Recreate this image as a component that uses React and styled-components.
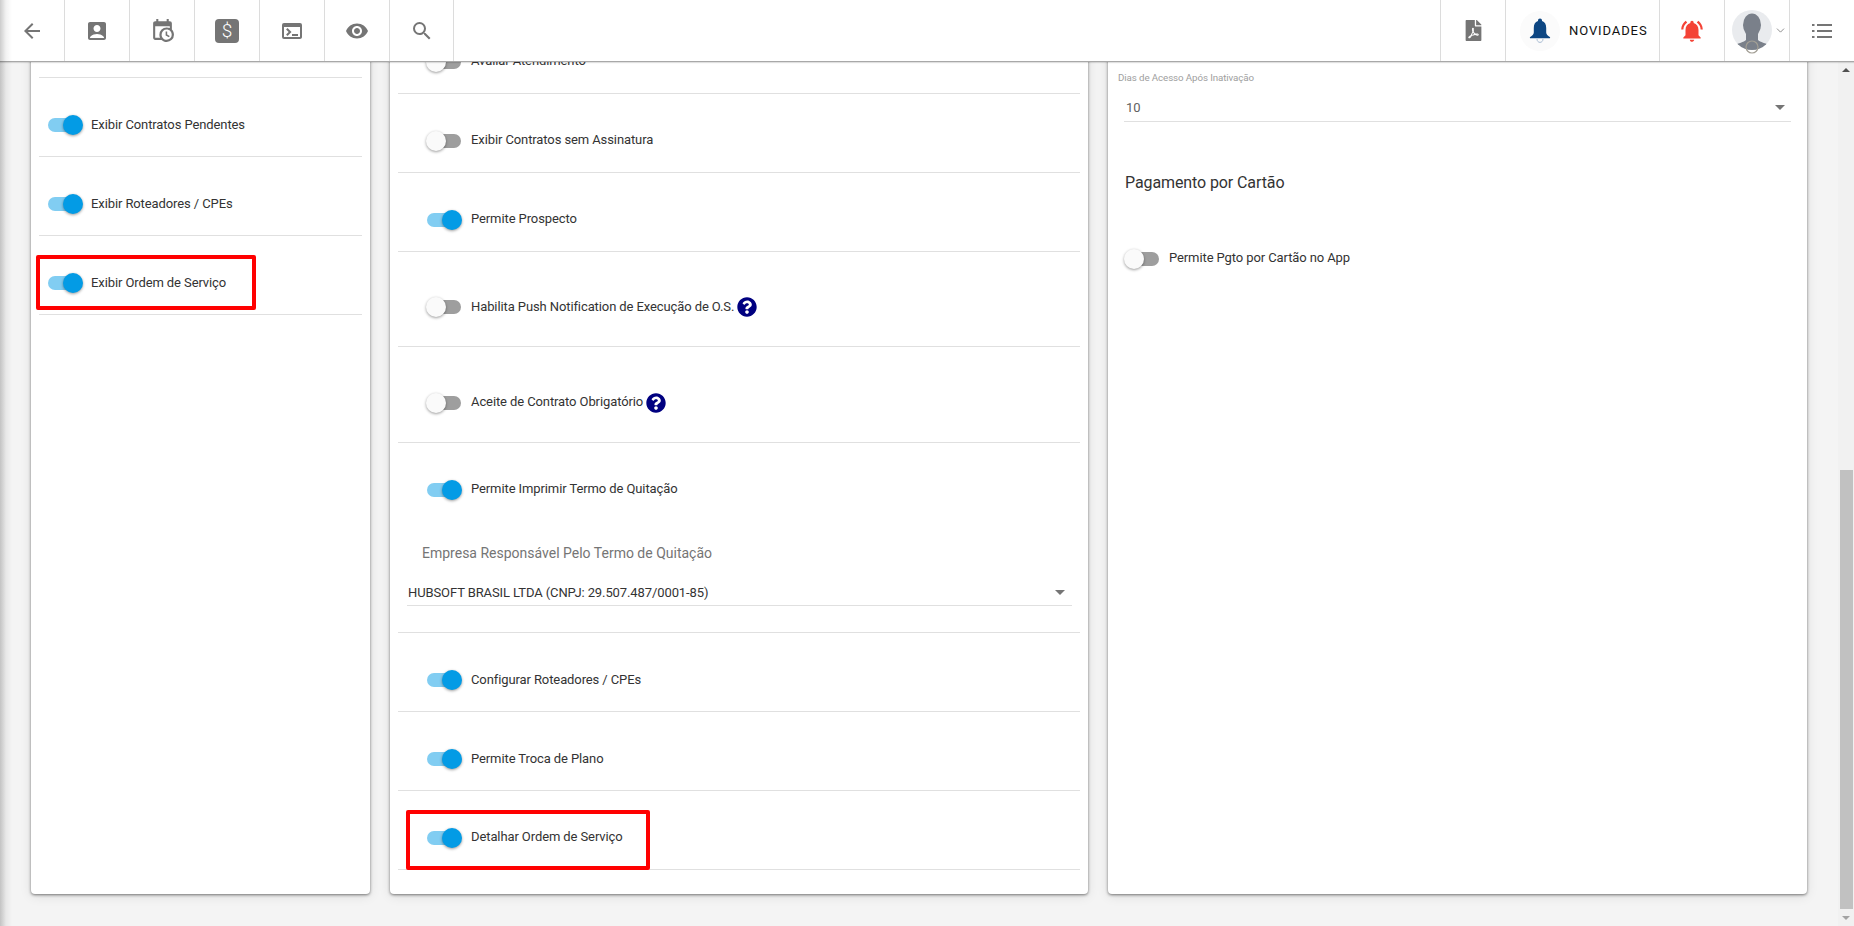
import React from "react";
import styled, { createGlobalStyle } from "styled-components";
import {
  MdArrowBack,
  MdAccountBox,
  MdTerminal,
  MdVisibility,
  MdSearch,
  MdNotificationsActive,
} from "react-icons/md";
import { FaFilePdf, FaQuestionCircle } from "react-icons/fa";
import { ChevronDown } from "lucide-react";

const GlobalStyle = createGlobalStyle`
  html, body {
    margin: 0;
    height: 100%;
    overflow: hidden;
    background: #f4f4f4;
    font-family: Roboto, "Liberation Sans", sans-serif;
  }
`;

const Page = styled.div`
  position: relative;
  display: flex;
  width: 1854px;
  height: 926px;
  overflow: hidden;
  background: #f4f4f4;
`;

// shadow of the collapsed side menu, lies over the header too
const EdgeShadow = styled.div`
  position: absolute;
  top: 0;
  left: 0;
  bottom: 0;
  width: 12px;
  z-index: 20;
  pointer-events: none;
  background: linear-gradient(to right, rgba(0, 0, 0, 0.2), rgba(0, 0, 0, 0.05) 50%, rgba(0, 0, 0, 0));
`;

const Header = styled.header`
  position: absolute;
  top: 0;
  left: 0;
  right: 0;
  height: 61px;
  z-index: 10;
  display: flex;
  justify-content: space-between;
  background: #fff;
  border-bottom: 1px solid #a8a8a8;
  box-shadow: 0 1px 1px rgba(0, 0, 0, 0.12);
`;

const HeaderGroup = styled.div`
  display: flex;
`;

const HeaderCell = styled.div`
  display: flex;
  align-items: center;
  justify-content: center;
  box-sizing: border-box;
  width: ${({ $w }) => $w || 65}px;
  height: 61px;
  color: #757575;
  border-left: ${({ $noLine }) => ($noLine ? "none" : "1px solid #dcdcdc")};
  border-right: ${({ $closing }) => ($closing ? "1px solid #dcdcdc" : "none")};
`;

const DollarIcon = styled.div`
  width: 24px;
  height: 24px;
  border-radius: 4px;
  background: #757575;
  color: #fff;
  font-size: 19px;
  font-weight: 300;
  line-height: 24px;
  text-align: center;
`;

const BellCircle = styled.div`
  display: flex;
  align-items: center;
  justify-content: center;
  width: 40px;
  height: 40px;
  border-radius: 50%;
  background: #fbfbfb;
  margin-right: 9px;
`;

const NewsLabel = styled.span`
  font-size: 13px;
  font-weight: 400;
  letter-spacing: 0.9px;
  color: #111;
`;

const NewsCell = styled(HeaderCell)`
  justify-content: flex-start;
  padding-left: 14px;
`;

const AvatarCell = styled(HeaderCell)`
  gap: 2px;
  padding-left: 5px;
  color: #757575;
`;

const Content = styled.main`
  flex: 1;
  display: grid;
  grid-template-columns: 339px 698px 699px;
  column-gap: 20px;
  height: 894px;
  padding-left: 31px;
`;

const Card = styled.section`
  box-sizing: border-box;
  height: 894px;
  background: #fff;
  border-radius: 0 0 4px 4px;
  box-shadow: 0 1px 3px rgba(0, 0, 0, 0.5), 0 2px 12px rgba(0, 0, 0, 0.1);
  padding: ${({ $pt }) => $pt || 0}px 8px 0;
`;

const Row = styled.div`
  position: relative;
  box-sizing: border-box;
  display: flex;
  align-items: center;
  height: ${({ $h }) => $h || 79}px;
  padding: ${({ $pt }) => $pt || 16}px 0 0 ${({ $pl }) => $pl || 9}px;
  border-bottom: 1px solid #e0e0e0;
`;

const Block = styled.div`
  box-sizing: border-box;
  height: ${({ $h }) => $h}px;
  padding-top: 38px;
  border-bottom: 1px solid #e0e0e0;
`;

const InlineOption = styled.div`
  display: flex;
  align-items: center;
  padding-left: ${({ $pl }) => $pl || 0}px;
`;

const Track = styled.div`
  flex: none;
  display: flex;
  align-items: center;
  justify-content: ${({ $on }) => ($on ? "flex-end" : "flex-start")};
  width: 34px;
  height: 14px;
  border-radius: 7px;
  margin-right: ${({ $gap }) => $gap || 10}px;
  background: ${({ $on }) => ($on ? "#81cdf2" : "#9e9e9e")};
`;

const Thumb = styled.div`
  flex: none;
  width: 20px;
  height: 20px;
  border-radius: 50%;
  margin: 0 -1px;
  background: ${({ $on }) => ($on ? "#039be5" : "#fafafa")};
  box-shadow: 0 1px 3px rgba(0, 0, 0, 0.4);
`;

const OptionText = styled.span`
  padding-bottom: 2px;
  font-size: 13px;
  letter-spacing: -0.1px;
  color: #333;
  white-space: nowrap;
`;

const HelpMark = styled(FaQuestionCircle)`
  flex: none;
  margin-left: 3px;
  color: #000080;
`;

const Highlight = styled.div`
  position: absolute;
  box-sizing: border-box;
  top: 19px;
  left: ${({ $l }) => $l}px;
  width: ${({ $w }) => $w}px;
  height: ${({ $h }) => $h}px;
  border: 4px solid #ff0000;
  border-radius: 2px;
  pointer-events: none;
`;

const CompanyLabel = styled.div`
  margin: 46px 0 0 24px;
  font-size: 14px;
  line-height: 18px;
  color: #757575;
`;

const SelectLine = styled.div`
  box-sizing: border-box;
  display: flex;
  align-items: center;
  justify-content: space-between;
  height: 20px;
  margin: 24px 8px 0 9px;
  padding: 0 7px 7px 1px;
  border-bottom: 1px solid #e0e0e0;
  font-size: 13px;
  letter-spacing: -0.1px;
  color: #333;
`;

const Caret = styled.span`
  width: 0;
  height: 0;
  border-left: 5px solid transparent;
  border-right: 5px solid transparent;
  border-top: 5px solid #757575;
`;

const RightBody = styled.div`
  padding: 72px 8px 0 8px;
`;

const SmallLabel = styled.div`
  margin-left: -6px;
  font-size: 9.75px;
  line-height: 12px;
  color: #9e9e9e;
  letter-spacing: -0.1px;
`;

const DaysLine = styled(SelectLine)`
  height: 21px;
  margin: 17px 0 0 0;
  padding-left: 2px;
  padding-right: 6px;
  color: #616161;
  letter-spacing: 0;
`;

const SectionTitle = styled.h3`
  margin: 50px 0 0 1px;
  font-size: 16px;
  font-weight: 400;
  line-height: 22px;
  letter-spacing: -0.1px;
  color: #333;
`;

const CardOption = styled(InlineOption)`
  margin-top: 56px;
  padding-left: 1px;
`;

const Scrollbar = styled.aside`
  flex: none;
  display: flex;
  flex-direction: column;
  align-items: stretch;
  width: 16px;
  padding-top: 61px;
  background: #f1f1f1;
`;

const ScrollArrow = styled.div`
  flex: none;
  display: flex;
  align-items: center;
  justify-content: center;
  height: 17px;

  &::after {
    content: "";
    border-left: 4px solid transparent;
    border-right: 4px solid transparent;
    ${({ $down }) =>
      $down ? "border-top: 4px solid #a3a3a3;" : "border-bottom: 4px solid #505050;"}
  }
`;

const ScrollThumb = styled.div`
  height: 439px;
  margin: auto 1px 0 2px;
  background: #c1c1c1;
`;

const CalendarClockIcon = () => (
  <svg width="25" height="25" viewBox="0 0 24 24" fill="currentColor">
    <path d="M15,13H16.5V15.82L18.94,17.23L18.19,18.53L15,16.69V13M19,8H5V19H9.67C9.24,18.09 9,17.07 9,16A7,7 0 0,1 16,9C17.07,9 18.09,9.24 19,9.67V8M5,21C3.89,21 3,20.1 3,19V5C3,3.89 3.89,3 5,3H6V1H8V3H16V1H18V3H19A2,2 0 0,1 21,5V11.1C22.24,12.36 23,14.09 23,16A7,7 0 0,1 16,23C14.09,23 12.36,22.24 11.1,21H5M16,11.15A4.85,4.85 0 0,0 11.15,16C11.15,18.68 13.32,20.85 16,20.85A4.85,4.85 0 0,0 20.85,16C20.85,13.32 18.68,11.15 16,11.15Z" />
  </svg>
);

const BlueBell = () => (
  <svg width="22" height="26" viewBox="0 0 22 26">
    <path
      fill="#0d4682"
      d="M11 0.5c1.2 0 2 .9 2 2v.6c3 .9 4.2 3.6 4.2 6.9v4.4c0 2 1.6 3.2 3.6 4.6.6.4.4 1.3-.4 1.3H1.6c-.8 0-1-.9-.4-1.3 2-1.4 3.6-2.6 3.6-4.6V10c0-3.3 1.2-6 4.2-6.9v-.6c0-1.1.8-2 2-2z"
    />
    <path fill="none" stroke="#a9bdd3" strokeWidth="1" d="M8 21c0 2 1.3 3.4 3 3.4s3-1.4 3-3.4" />
  </svg>
);

const AvatarIcon = () => (
  <svg width="40" height="46" viewBox="0 0 40 46" style={{ marginTop: 4 }}>
    <defs>
      <clipPath id="avatar-clip">
        <circle cx="20" cy="20" r="20" />
      </clipPath>
    </defs>
    <circle cx="20" cy="20" r="20" fill="#e9ebee" />
    <g clipPath="url(#avatar-clip)" fill="#7a808a">
      <ellipse cx="20" cy="15" rx="9" ry="11.5" />
      <path d="M14 22h12v8c2 2 8 3.5 11 5v6H3v-6c3-1.5 9-3 11-5z" />
    </g>
    <circle cx="20" cy="37" r="6" fill="none" stroke="#a39f95" strokeWidth="1.2" />
  </svg>
);

const ListIcon = () => (
  <svg width="20" height="16" viewBox="0 0 20 16" fill="currentColor">
    <rect x="0" y="1" width="2.5" height="2" />
    <rect x="0" y="7" width="2.5" height="2" />
    <rect x="0" y="13" width="2.5" height="2" />
    <rect x="5" y="1" width="15" height="2" />
    <rect x="5" y="7" width="15" height="2" />
    <rect x="5" y="13" width="15" height="2" />
  </svg>
);

const Option = ({ on, label, help, gap }) => (
  <>
    <Track $on={on} $gap={gap}>
      <Thumb $on={on} />
    </Track>
    <OptionText>{label}</OptionText>
    {help ? <HelpMark size={20} /> : null}
  </>
);

const leftRows = [
  { on: true, label: "Exibir Contratos Pendentes" },
  { on: true, label: "Exibir Roteadores / CPEs" },
];

const middleTop = [
  { on: false, label: "Avaliar Atendimento" },
  { on: false, label: "Exibir Contratos sem Assinatura" },
  { on: true, label: "Permite Prospecto" },
];

const App = () => {
  return (
    <Page>
      <GlobalStyle />
      <EdgeShadow />
      <Header>
        <HeaderGroup>
          <HeaderCell $w={64} $noLine>
            <MdArrowBack size={24} />
          </HeaderCell>
          <HeaderCell>
            <MdAccountBox size={24} />
          </HeaderCell>
          <HeaderCell>
            <CalendarClockIcon />
          </HeaderCell>
          <HeaderCell>
            <DollarIcon>$</DollarIcon>
          </HeaderCell>
          <HeaderCell>
            <MdTerminal size={24} />
          </HeaderCell>
          <HeaderCell>
            <MdVisibility size={24} />
          </HeaderCell>
          <HeaderCell $closing>
            <MdSearch size={24} />
          </HeaderCell>
        </HeaderGroup>
        <HeaderGroup>
          <HeaderCell>
            <FaFilePdf size={21} />
          </HeaderCell>
          <NewsCell $w={154}>
            <BellCircle>
              <BlueBell />
            </BellCircle>
            <NewsLabel>NOVIDADES</NewsLabel>
          </NewsCell>
          <HeaderCell>
            <MdNotificationsActive size={26} color="#f44336" />
          </HeaderCell>
          <AvatarCell>
            <AvatarIcon />
            <ChevronDown size={13} strokeWidth={1.5} />
          </AvatarCell>
          <HeaderCell>
            <ListIcon />
          </HeaderCell>
        </HeaderGroup>
      </Header>

      <Content>
        <Card>
          <Row $h={78} />
          {leftRows.map((row) => (
            <Row key={row.label}>
              <Option on={row.on} label={row.label} gap={9} />
            </Row>
          ))}
          <Row>
            <Option on label="Exibir Ordem de Serviço" gap={9} />
            <Highlight $l={-3} $w={220} $h={55} />
          </Row>
        </Card>

        <Card $pt={15}>
          {middleTop.map((row) => (
            <Row key={row.label} $pt={15} $pl={29}>
              <Option on={row.on} label={row.label} />
            </Row>
          ))}
          <Row $h={95} $pt={16} $pl={29}>
            <Option label="Habilita Push Notification de Execução de O.S." help />
          </Row>
          <Row $h={96} $pt={16} $pl={29}>
            <Option label="Aceite de Contrato Obrigatório" help />
          </Row>
          <Block $h={190}>
            <InlineOption $pl={29}>
              <Option on label="Permite Imprimir Termo de Quitação" />
            </InlineOption>
            <CompanyLabel>Empresa Responsável Pelo Termo de Quitação</CompanyLabel>
            <SelectLine>
              <span>HUBSOFT BRASIL LTDA (CNPJ: 29.507.487/0001-85)</span>
              <Caret />
            </SelectLine>
          </Block>
          <Row $pt={16} $pl={29}>
            <Option on label="Configurar Roteadores / CPEs" />
          </Row>
          <Row $pt={16} $pl={29}>
            <Option on label="Permite Troca de Plano" />
          </Row>
          <Row $pt={15} $pl={29}>
            <Option on label="Detalhar Ordem de Serviço" />
            <Highlight $l={8} $w={244} $h={60} />
          </Row>
        </Card>

        <Card>
          <RightBody>
            <SmallLabel>Dias de Acesso Após Inativação</SmallLabel>
            <DaysLine>
              <span>10</span>
              <Caret />
            </DaysLine>
            <SectionTitle>Pagamento por Cartão</SectionTitle>
            <CardOption>
              <Option label="Permite Pgto por Cartão no App" />
            </CardOption>
          </RightBody>
        </Card>
      </Content>

      <Scrollbar>
        <ScrollArrow />
        <ScrollThumb />
        <ScrollArrow $down />
      </Scrollbar>
    </Page>
  );
};

export default App;
